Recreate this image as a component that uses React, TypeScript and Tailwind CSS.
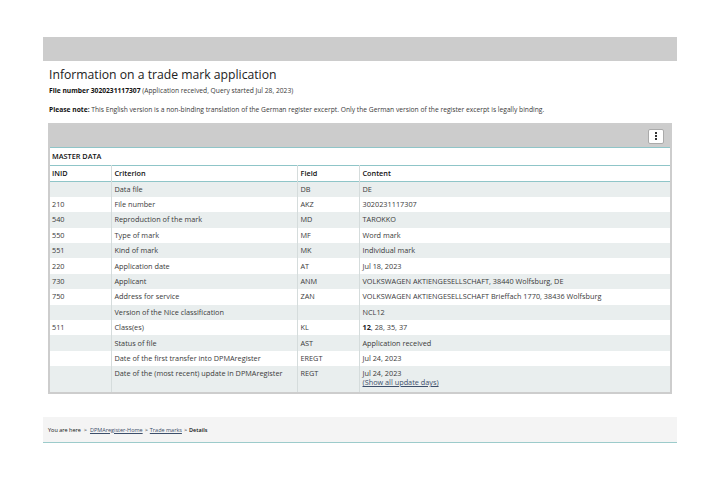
const rows: { inid: string; crit: string; field: string; content: React.ReactNode }[] = [
  { inid: "", crit: "Data file", field: "DB", content: "DE" },
  { inid: "210", crit: "File number", field: "AKZ", content: "3020231117307" },
  { inid: "540", crit: "Reproduction of the mark", field: "MD", content: "TAROKKO" },
  { inid: "550", crit: "Type of mark", field: "MF", content: "Word mark" },
  { inid: "551", crit: "Kind of mark", field: "MK", content: "Individual mark" },
  { inid: "220", crit: "Application date", field: "AT", content: "Jul 18, 2023" },
  { inid: "730", crit: "Applicant", field: "ANM", content: "VOLKSWAGEN AKTIENGESELLSCHAFT, 38440 Wolfsburg, DE" },
  { inid: "750", crit: "Address for service", field: "ZAN", content: "VOLKSWAGEN AKTIENGESELLSCHAFT Brieffach 1770, 38436 Wolfsburg" },
  { inid: "", crit: "Version of the Nice classification", field: "", content: "NCL12" },
  {
    inid: "511",
    crit: "Class(es)",
    field: "KL",
    content: (
      <>
        <b className="font-bold text-[#222]">12</b>, 28, 35, 37
      </>
    ),
  },
  { inid: "", crit: "Status of file", field: "AST", content: "Application received" },
  { inid: "", crit: "Date of the first transfer into DPMAregister", field: "EREGT", content: "Jul 24, 2023" },
];

export default function App() {
  return (
    <div className="min-h-[479px] bg-white pt-[37px] font-['Open_Sans',sans-serif] text-[#3a3a3a]">
      <div className="mx-auto w-[634px]">
        <div className="h-[24px] bg-[#cccccc]" />
        <div className="px-[5px]">
          <h1 className="mt-[5px] pl-px text-[12.2px] leading-[18px] text-[#222]">
            Information on a trade mark application
          </h1>
          <p className="mt-[1px] pl-px text-[6.7px] leading-[12px]">
            <b className="font-bold text-[#111]">File number 3020231117307</b> (Application received, Query started Jul 28, 2023)
          </p>
          <p className="mt-[7px] pl-px text-[6.7px] leading-[12px]">
            <b className="font-bold text-[#111]">Please note:</b> This English version is a non-binding translation of the German register excerpt. Only the German version of the register excerpt is legally binding.
          </p>

          <div className="mt-[7px] border-2 border-[#cdcdcd]">
            <div className="flex h-[22px] items-center justify-end bg-[#cccccc] pr-[6px]">
              <div className="flex h-[15px] w-[16px] flex-col items-center justify-center gap-[1.5px] rounded-[2px] border border-[#aaa] bg-white">
                <span className="h-[1.5px] w-[1.5px] bg-[#333]" />
                <span className="h-[1.5px] w-[1.5px] bg-[#333]" />
                <span className="h-[1.5px] w-[1.5px] bg-[#333]" />
              </div>
            </div>
            <table className="w-full border-collapse text-[7.3px] leading-[9px]">
              <tbody>
                <tr className="h-[18px] border-t border-b border-[#8fc5c8]">
                  <td colSpan={4} className="pl-[2px] font-semibold text-[#111]">
                    MASTER DATA
                  </td>
                </tr>
                <tr className="h-[16px] border-b border-[#8fc5c8] font-semibold text-[#111]">
                  <td className="w-[61px] pl-[2px]">INID</td>
                  <td className="w-[186px] border-l border-[#d5dcdc] pl-[3px]">Criterion</td>
                  <td className="w-[62px] border-l border-[#d5dcdc] pl-[3px]">Field</td>
                  <td className="border-l border-[#d5dcdc] pl-[3px]">Content</td>
                </tr>
                {rows.map((r, i) => (
                  <tr key={i} className={`h-[15.4px] ${i % 2 === 0 ? "bg-[#e9eeee]" : "bg-white"}`}>
                    <td className="pl-[2px]">{r.inid}</td>
                    <td className="border-l border-[#d5dcdc] pl-[3px]">{r.crit}</td>
                    <td className="border-l border-[#d5dcdc] pl-[3px]">{r.field}</td>
                    <td className="border-l border-[#d5dcdc] pl-[3px]">{r.content}</td>
                  </tr>
                ))}
                <tr className="h-[26px] bg-[#e9eeee] align-top">
                  <td className="pl-[2px]" />
                  <td className="border-l border-[#d5dcdc] pl-[3px] pt-[3px]">Date of the (most recent) update in DPMAregister</td>
                  <td className="border-l border-[#d5dcdc] pl-[3px] pt-[3px]">REGT</td>
                  <td className="border-l border-[#d5dcdc] pl-[3px] pt-[3px]">
                    <div>Jul 24, 2023</div>
                    <a className="text-[#3d4f6b] underline">(Show all update days)</a>
                  </td>
                </tr>
              </tbody>
            </table>
          </div>
        </div>

        <div className="mt-[23px] flex h-[26px] items-center border-b border-[#9ccbcb] bg-[#f4f4f4] pl-[5px] text-[5.5px] text-[#111]">
          <span>You are here</span>
          <span className="mx-[3px]">&gt;</span>
          <a className="text-[#3d4f6b] underline">DPMAregister-Home</a>
          <span className="mx-[2px]">&gt;</span>
          <a className="text-[#3d4f6b] underline">Trade marks</a>
          <span className="mx-[2px]">&gt;</span>
          <span className="font-semibold">Details</span>
        </div>
      </div>
    </div>
  );
}
